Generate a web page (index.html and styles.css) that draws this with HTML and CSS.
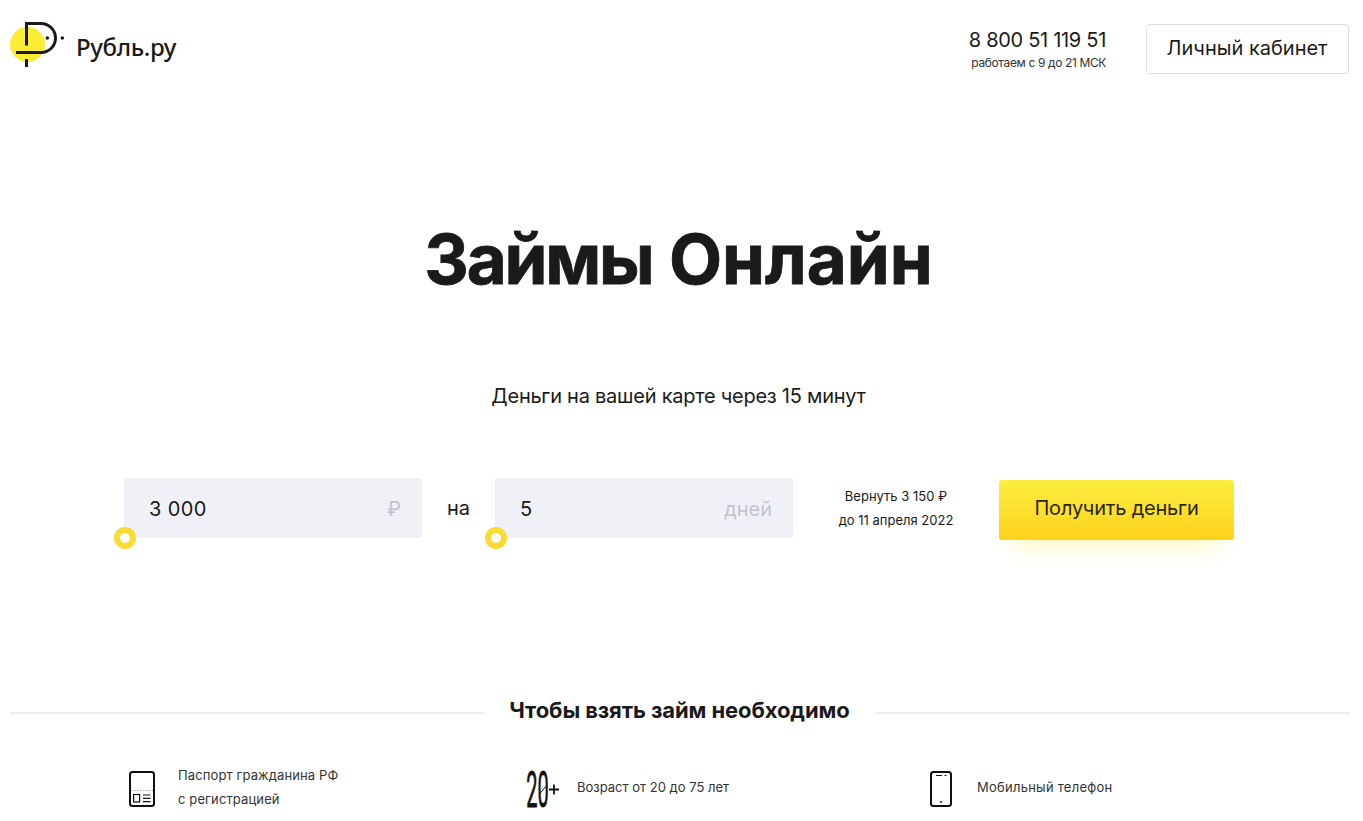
FILE: index.html
```html
<!DOCTYPE html>
<html lang="ru">

<head>
    <meta charset="UTF-8">
    <meta name="viewport" content="width=device-width, initial-scale=1.0">
    <title>Рубль.ру</title>
    <link rel="stylesheet" href="styles.css">
</head>

<body>
    <header class="header">
        <a class="logo" href="#">
            <svg class="logo-icon" width="56" height="48" viewBox="0 0 56 48">
                <circle cx="17.500" cy="24.500" r="17.500" fill="#fbec35" />
                <path d="M16.500 25.500V3.500H31a14.500 14.500 0 0 1 0 29H6M16.500 39v8" fill="none" stroke="#1a1a1a" stroke-width="3" />
                <circle cx="37.300" cy="18" r="1.800" fill="#1a1a1a" />
                <circle cx="52.300" cy="18" r="1.800" fill="#1a1a1a" />
            </svg>
            <span class="logo-text">Рубль.ру</span>
        </a>
        <div class="contacts">
            <div class="phone">8 800 51 119 51</div>
            <div class="hours">работаем с 9 до 21 МСК</div>
        </div>
        <a class="cabinet" href="#">Личный кабинет</a>
    </header>

    <main>
        <h1 class="title"><span class="tight">Займы</span> Онлайн</h1>
        <p class="subtitle">Деньги на вашей карте через 15 минут</p>

        <form class="calc">
            <div class="field">
                <span class="value amount">3 000</span>
                <span class="unit">₽</span>
                <span class="handle"></span>
            </div>
            <span class="sep">на</span>
            <div class="field">
                <span class="value">5</span>
                <span class="unit">дней</span>
                <span class="handle"></span>
            </div>
            <div class="result">
                <div class="result-sum">Вернуть 3 150 ₽</div>
                <div class="result-date">до 11 апреля 2022</div>
            </div>
            <button class="submit" type="button">Получить деньги</button>
        </form>

        <h2 class="section-title"><span>Чтобы взять займ необходимо</span></h2>

        <ul class="needs">
            <li class="need">
                <svg class="need-icon" width="40" height="40" viewBox="0 0 40 40" fill="none" stroke="#111">
                    <rect x="5" y="3" width="24" height="34" rx="2.500" stroke-width="2" />
                    <path d="M6 21.500h22" stroke="#aaa" stroke-dasharray="1.500 1.500" />
                    <rect x="8.600" y="25.500" width="6" height="7.500" stroke-width="1.200" />
                    <path d="M18 26h7.500M18 29.300h7.500M18 32.600h7.500" stroke-width="1.200" />
                </svg>
                <span class="need-text passport">Паспорт гражданина РФ<br>с регистрацией</span>
            </li>
            <li class="need">
                <svg class="need-icon" width="40" height="64" viewBox="0 -12 40 64">
                    <text class="age-digits" transform="translate(2.200 37.500) scale(.4 1)">20</text>
                    <path d="M15.500 25l7.500-9" stroke="#111" stroke-width="1" />
                    <path d="M25 20.500h10M30 15.500v10" stroke="#111" stroke-width="1.800" />
                </svg>
                <span class="need-text age">Возраст от 20 до 75 лет</span>
            </li>
            <li class="need">
                <svg class="need-icon" width="40" height="40" viewBox="0 0 40 40" fill="none" stroke="#111">
                    <rect x="7" y="3" width="20" height="34" rx="2.500" stroke-width="2" />
                    <path d="M12 6.500h6M20.500 6.500h2" stroke-width="1" />
                    <circle cx="17" cy="33" r="1" fill="#111" stroke="none" />
                </svg>
                <span class="need-text mobile">Мобильный телефон</span>
            </li>
        </ul>
    </main>
</body>

</html>
```
FILE: styles.css
```css
* {
    box-sizing: border-box;
}

body {
    margin: 0;
    height: 821px;
    overflow: hidden;
    font-family: Inter, "Noto Sans", sans-serif;
    font-size: 20px;
    color: #1a1a1a;
    background-color: #fff;
    white-space: nowrap;
}

.header {
    display: flex;
    align-items: flex-start;
    height: 98px;
    padding: 20px 14px 0 10px;
}

.logo {
    display: flex;
    margin-right: auto;
    color: #1a1a1a;
    text-decoration: none;
}

.logo-text {
    margin: 13px 0 0 10px;
    font-family: "Noto Sans", sans-serif;
    font-size: 24px;
    font-weight: 500;
    letter-spacing: -0.35px;
    line-height: 28px;
}

.contacts {
    margin-right: 40px;
    padding-top: 6px;
    text-align: right;
}

.phone {
    letter-spacing: -0.3px;
    line-height: 28px;
}

.hours {
    color: #333;
    font-size: 12px;
    letter-spacing: -0.37px;
    line-height: 17px;
}

.cabinet {
    width: 203px;
    height: 50px;
    margin-top: 4px;
    padding-right: 1px;
    border: 1px solid #dfdfe3;
    border-radius: 3px;
    color: #1a1a1a;
    line-height: 46px;
    text-align: center;
    text-decoration: none;
}

.title {
    margin: 116px 6px 0 0;
    font-size: 69px;
    font-weight: 700;
    line-height: 90px;
    text-align: center;
    -webkit-text-stroke: 0.8px #1a1a1a;
}

.tight {
    letter-spacing: -2.2px;
}

.subtitle {
    margin: 77px 6px 0 0;
    letter-spacing: -0.25px;
    line-height: 30px;
    text-align: center;
}

.calc {
    display: flex;
    height: 60px;
    margin: 67px 0 0 124px;
}

.field {
    position: relative;
    display: flex;
    justify-content: space-between;
    width: 298px;
    height: 60px;
    padding: 0 21px 0 25px;
    border-radius: 3px;
    background-color: #f0f1f6;
    line-height: 62px;
}

.amount {
    letter-spacing: 0.4px;
}

.unit {
    color: #c3c2d3;
}

.handle {
    position: absolute;
    left: -10px;
    bottom: -11px;
    width: 22px;
    height: 22px;
    border: 6px solid #f8dc34;
    border-radius: 50%;
    background-color: #fff;
}

.sep {
    width: 73px;
    line-height: 60px;
    text-align: center;
}

.result {
    width: 206px;
    padding-top: 6px;
    font-size: 13px;
    line-height: 24px;
    text-align: center;
}

.submit {
    width: 235px;
    height: 60px;
    margin-top: 2px;
    padding: 0 0 4px;
    border: none;
    border-radius: 3px;
    background: linear-gradient(#fcee40, #fdd21c);
    box-shadow: 0 22px 20px -14px rgba(252, 238, 64, 0.3);
    color: #2b2610;
    font-family: inherit;
    font-size: 20px;
    letter-spacing: -0.2px;
}

.section-title {
    display: flex;
    align-items: center;
    gap: 25px;
    margin: 157px 13px 0 10px;
    font-size: 22px;
    font-weight: 700;
    letter-spacing: -0.1px;
    line-height: 30px;
}

.section-title span {
    margin-left: -1px;
}

.section-title::before,
.section-title::after {
    content: "";
    flex: 1;
    height: 2px;
    margin-top: 6px;
    background-color: #ededf0;
}

.needs {
    display: grid;
    grid-template-columns: 399px 400px 400px;
    margin: 36px 0 0 125px;
    padding: 0;
    list-style: none;
}

.need {
    display: flex;
    align-items: center;
    height: 52px;
    gap: 13px;
}

.need-icon {
    flex: none;
    margin-top: 3px;
}

.need-text {
    color: #333;
    font-size: 13px;
    line-height: 24px;
}

.passport {
    letter-spacing: 0.12px;
}

.mobile {
    letter-spacing: 0.25px;
}

.age-digits {
    fill: #111;
    stroke: #111;
    stroke-width: 0.8px;
    font-family: Roboto, sans-serif;
    font-size: 50px;
    font-weight: 400;
}
```
